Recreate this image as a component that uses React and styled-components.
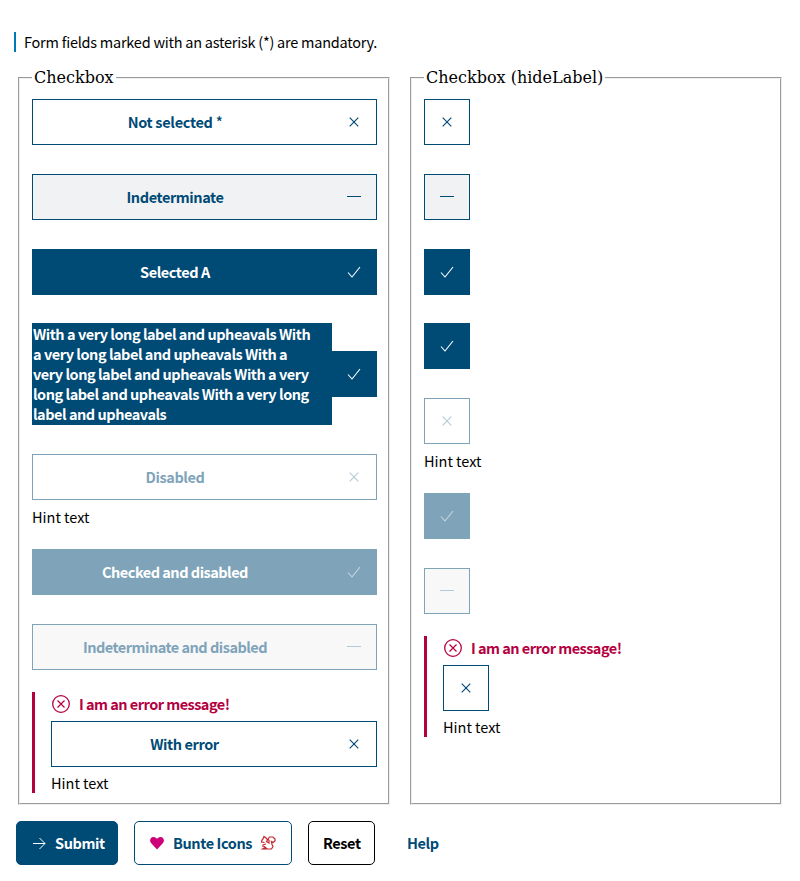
import React from "react";
import styled, { createGlobalStyle } from "styled-components";

const Global = createGlobalStyle`
  body { margin: 0; background: #fff; color: #000; }
  *, *::before, *::after { box-sizing: border-box; }
`;

const sans = `"Noto Sans CJK SC", "Noto Sans", sans-serif`;
const navy = "#004b76";
const muted = "#7fa4ba";
const crimson = "#b5003f";

const Page = styled.main`
  width: 800px;
  height: 881px;
  padding: 32px 18px 0;
  font: 400 14.5px/20px ${sans};
`;

const Notice = styled.p`
  width: fit-content;
  margin: 0 0 0 -4px;
  padding-left: 8px;
  border-left: 2px solid #0077b6;
  letter-spacing: -0.24px;
  line-height: 20px;
`;

const Columns = styled.div`
  display: grid;
  grid-template-columns: 372px 372px;
  gap: 20px;
  margin-top: 16px;
`;

const Group = styled.fieldset`
  min-width: 0;
  height: 737px;
  margin: 0;
  padding: 12px 11px 0 12px;
  border: 2px groove ThreeDFace;
`;

const Legend = styled.legend`
  padding: 0 2px;
  font: 16px/19px "DejaVu Serif", serif;
`;

const Stack = styled.div`
  display: flex;
  flex-direction: column;
  align-items: stretch;
  gap: 28.75px;
`;

const Field = styled.div``;

const ErrorField = styled.div`
  height: 101px;
  margin-top: -6.5px;
  padding-left: 16px;
  border-left: 3px solid ${crimson};
`;

const ErrorMessage = styled.div`
  display: flex;
  align-items: center;
  gap: 9px;
  height: 29px;
  padding: 0 0 5px 1px;
  color: ${crimson};
  font-weight: 700;
  letter-spacing: -0.53px;
`;

const Hint = styled.div`
  height: 20.25px;
  padding-top: ${(p) => (p.$tight ? 6 : 7)}px;
  white-space: nowrap;
`;

const tones = {
  off: `background:#fff;border-color:${navy};color:${navy};`,
  mixed: `background:#f1f2f4;border-color:${navy};color:${navy};`,
  on: `background:${navy};border-color:${navy};color:#fff;`,
  offDisabled: `background:#fff;border-color:${muted};color:${muted};`,
  onDisabled: `background:${muted};border-color:${muted};color:#fff;`,
  mixedDisabled: `background:#f8f8f8;border-color:${muted};color:${muted};`,
};

const Toggle = styled.label`
  display: flex;
  align-items: center;
  width: ${(p) => (p.$compact ? "46px" : "auto")};
  height: 46px;
  border: 1px solid;
  ${(p) => tones[p.$tone]}
`;

const ToggleText = styled.span`
  flex: 1;
  padding-right: 15px;
  text-align: center;
  font-weight: 700;
  letter-spacing: ${(p) => p.$track ?? -0.42}px;
  white-space: nowrap;
`;

const Asterisk = styled.span`
  margin-left: 3px;
  font-weight: 500;
`;

const MarkBox = styled.span`
  display: grid;
  place-items: center;
  width: 44px;
  height: 44px;
  opacity: ${(p) => (p.$faded ? 0.55 : 1)};
`;

const LongRow = styled.div`
  display: flex;
  align-items: center;
  height: 102px;
`;

const LongLabel = styled.div`
  width: 300px;
  height: 102px;
  padding: 1px;
  background: ${navy};
  color: #fff;
  font-weight: 700;
  letter-spacing: -0.47px;
  white-space: nowrap;
`;

const LongMark = styled.div`
  display: grid;
  place-items: center;
  width: 46px;
  height: 46px;
  margin-left: -1px;
  background: ${navy};
  color: #fff;
`;

const Actions = styled.div`
  display: flex;
  gap: 16px;
  margin: 16px 0 0 -2px;
`;

const Button = styled.button`
  display: flex;
  align-items: center;
  width: ${(p) => p.$width}px;
  height: 44px;
  padding: 0 0 0 ${(p) => p.$inset}px;
  border: 1px solid ${(p) => p.$edge};
  border-radius: 5px;
  background: ${(p) => p.$fill};
  color: ${(p) => p.$ink};
  font: 700 14.5px/20px ${sans};
  letter-spacing: -0.4px;
  white-space: nowrap;
`;

const Caption = styled.span`
  margin: 0 8px 0 9px;
`;

const Svg = styled.svg`
  display: block;
  flex: none;
  fill: none;
  stroke: currentColor;
`;

const Mark = ({ kind }) => (
  <Svg width="20" height="20" viewBox="0 0 20 20">
    {kind === "cross" && <path d="M5.700 5.700l8.600 8.600M14.300 5.700L5.700 14.300" strokeWidth="1.15" />}
    {kind === "dash" && <path d="M3 9.500h14" />}
    {kind === "check" && <path d="M4 10.500l4 4.500L16 5" strokeWidth="1.1" />}
  </Svg>
);

const kindOf = (tone) =>
  tone.startsWith("off") ? "cross" : tone.startsWith("mixed") ? "dash" : "check";

const Checkbox = ({ tone, label, track, compact, required }) => (
  <Toggle $tone={tone} $compact={compact}>
    {!compact && (
      <ToggleText $track={track}>
        {label}
        {required && <Asterisk>*</Asterisk>}
      </ToggleText>
    )}
    <MarkBox $faded={tone.endsWith("Disabled")}>
      <Mark kind={kindOf(tone)} />
    </MarkBox>
  </Toggle>
);

const ErrorNote = () => (
  <ErrorMessage>
    <Svg width="18" height="18" viewBox="0 0 18 18">
      <circle cx="9" cy="9" r="8.3" strokeWidth="1.3" />
      <path d="M5.500 5.500l7 7M12.500 5.500l-7 7" strokeWidth="1.2" />
    </Svg>
    I am an error message!
  </ErrorMessage>
);

export default function App() {
  return (
    <>
      <Global />
      <Page>
        <Notice>Form fields marked with an asterisk (*) are mandatory.</Notice>
        <Columns>
          <Group>
            <Legend>Checkbox</Legend>
            <Stack>
              <Checkbox tone="off" label="Not selected" track={-0.3} required />
              <Checkbox tone="mixed" label="Indeterminate" />
              <Checkbox tone="on" label="Selected A" />
              <LongRow>
                <LongLabel>
                  With a very long label and upheavals With<br />
                  a very long label and upheavals With a<br />
                  very long label and upheavals With a very<br />
                  long label and upheavals With a very long<br />
                  label and upheavals
                </LongLabel>
                <LongMark><Mark kind="check" /></LongMark>
              </LongRow>
              <Field>
                <Checkbox tone="offDisabled" label="Disabled" />
                <Hint>Hint text</Hint>
              </Field>
              <Checkbox tone="onDisabled" label="Checked and disabled" track={-0.5} />
              <Checkbox tone="mixedDisabled" label="Indeterminate and disabled" track={-0.51} />
              <ErrorField>
                <ErrorNote />
                <Checkbox tone="off" label="With error" />
                <Hint $tight>Hint text</Hint>
              </ErrorField>
            </Stack>
          </Group>
          <Group>
            <Legend>Checkbox (hideLabel)</Legend>
            <Stack>
              <Checkbox compact tone="off" />
              <Checkbox compact tone="mixed" />
              <Checkbox compact tone="on" />
              <Checkbox compact tone="on" />
              <Field>
                <Checkbox compact tone="offDisabled" />
                <Hint>Hint text</Hint>
              </Field>
              <Checkbox compact tone="onDisabled" />
              <Checkbox compact tone="mixedDisabled" />
              <ErrorField>
                <ErrorNote />
                <Checkbox compact tone="off" />
                <Hint $tight>Hint text</Hint>
              </ErrorField>
            </Stack>
          </Group>
        </Columns>
        <Actions>
          <Button $width={102} $inset={15} $edge={navy} $fill={navy} $ink="#fff">
            <Svg width="14" height="14" viewBox="0 0 14 14">
              <path d="M1 7.500h12M7.500 2L13 7.500 7.500 13" />
            </Svg>
            <Caption>Submit</Caption>
          </Button>
          <Button $width={158} $inset={15} $edge={navy} $fill="#fff" $ink={navy}>
            <Svg width="14" height="14" viewBox="0 0 14 14">
              <path fill="#cd0077" stroke="none" d="M7 13.500L1 7C-1 4.500.5 1 3.500 1 5.300 1 6.500 2 7 3 7.500 2 8.700 1 10.500 1 13.500 1 15 4.500 13 7z" />
            </Svg>
            <Caption>Bunte Icons</Caption>
            <Svg width="16" height="16" viewBox="0 0 16 16">
              <path stroke="#c4262e" strokeWidth="1.2" d="M3 4l1-2.500L6 3l1.500 2-1 1.500L9 8V5.500L8 4l1.500-2H13l2 2v2l-2 1.500-1.500-1 .5 3 1 2-1.500 2.500H2.500L4 13h2l-1.500-1.500L2 11M6 9L2.500 10M4.500 7.500L1.500 7 2 5l1-1" />
            </Svg>
          </Button>
          <Button $width={67} $inset={14} $edge="#000" $fill="#fff" $ink="#000">Reset</Button>
          <Button $width={67} $inset={15} $edge="transparent" $fill="transparent" $ink={navy}>Help</Button>
        </Actions>
      </Page>
    </>
  );
}
